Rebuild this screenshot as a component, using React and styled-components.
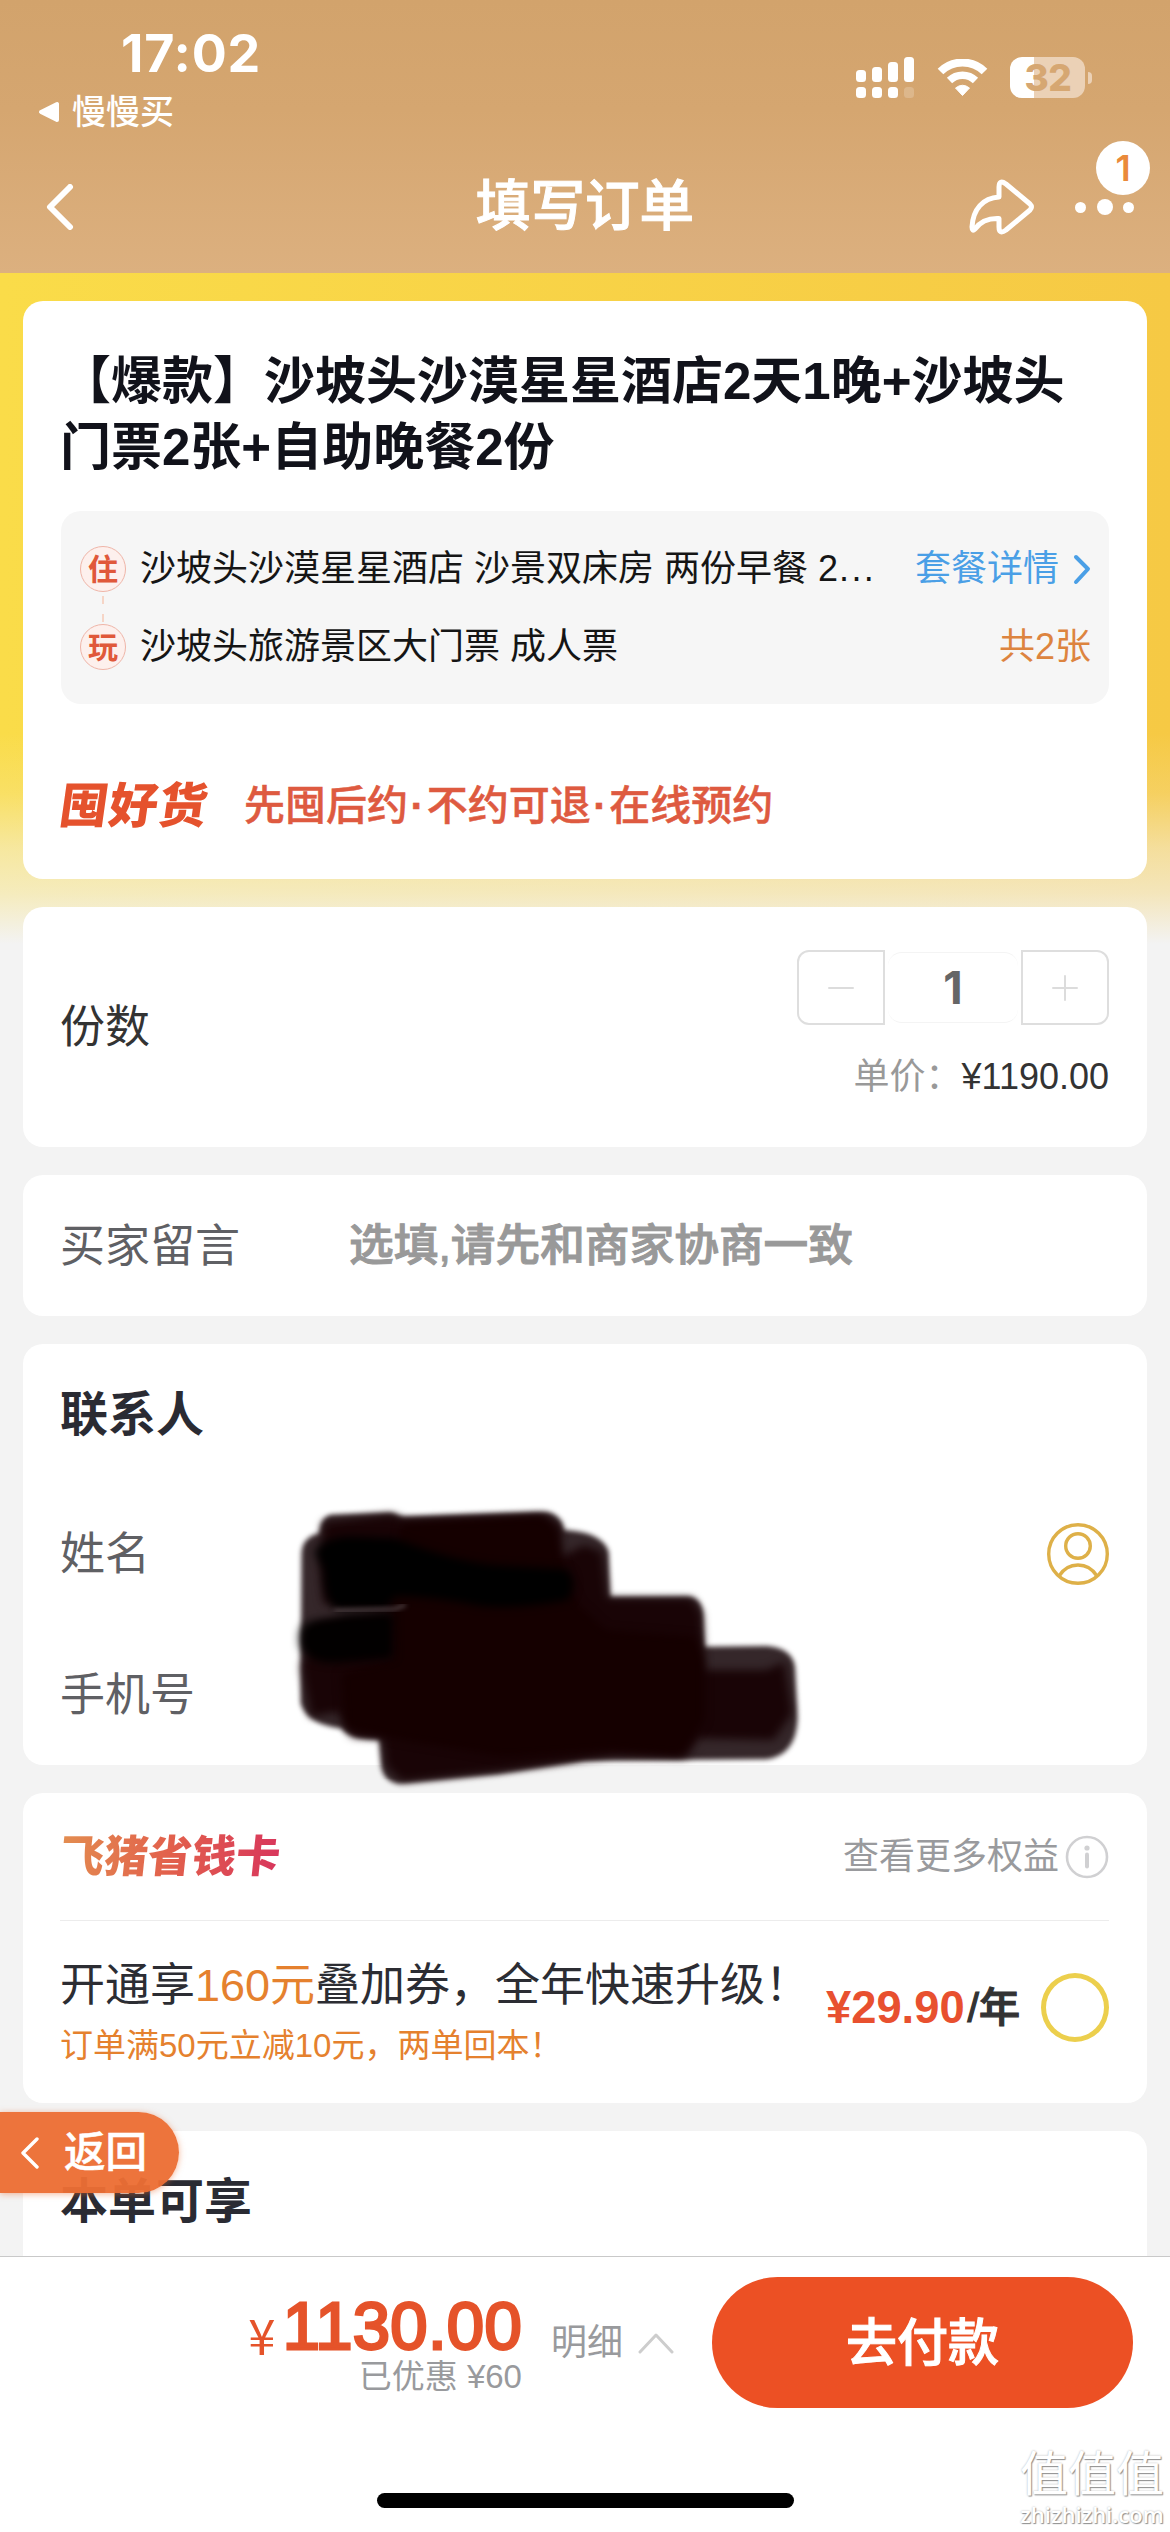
import React from 'react'
import styled, { createGlobalStyle } from 'styled-components'

const GlobalStyle = createGlobalStyle`
    * {
        box-sizing: border-box;
    }
    body {
        margin: 0;
        background: #f3f3f3;
        font-family: "Liberation Sans", "Noto Sans CJK SC", sans-serif;
        color: #2c2d33;
    }
`

const packageItems = [
    { tag: "住", name: "沙坡头沙漠星星酒店 沙景双床房 两份早餐 2", clipped: true, link: "套餐详情" },
    { tag: "玩", name: "沙坡头旅游景区大门票 成人票", count: "共2张" },
]

const signalBars = [
    { x: 0, top: 13 },
    { x: 16, top: 10 },
    { x: 32, top: 5 },
    { x: 48, top: 0 },
]

const Chevron = ({ d, width, height, color, stroke }) => (
    <svg width={width} height={height} viewBox={`0 0 ${width} ${height}`} fill="none">
        <path d={d} stroke={color} strokeWidth={stroke} strokeLinecap="round" strokeLinejoin="round" />
    </svg>
)

const StatusBar = () => {
    return (
        <StatusRow>
            <StatusLeft>
                <Time>17:02</Time>
                <BackApp>
                    <svg width="22" height="22" viewBox="0 0 22 22">
                        <path d="M3 11 L19 3 V19 Z" fill="#fff" stroke="#fff" strokeWidth="4" strokeLinejoin="round" />
                    </svg>
                    慢慢买
                </BackApp>
            </StatusLeft>
            <StatusRight>
                <svg width="59" height="41" viewBox="0 0 59 41" fill="#fff">
                    {signalBars.map((bar) => (
                        <React.Fragment key={bar.x}>
                            <rect x={bar.x} y={bar.top} width="10" height={25 - bar.top} rx="3.5" />
                            <rect x={bar.x} y="30" width="10" height="11" rx="3.5" opacity={bar.x === 48 ? 0.2 : 1} />
                        </React.Fragment>
                    ))}
                </svg>
                <svg width="51" height="38" viewBox="0 0 51 38" fill="none" stroke="#fff">
                    <path d="M3.5 12.5 A31.5 31.5 0 0 1 47.5 12.5" strokeWidth="8" />
                    <path d="M12.5 21.5 A18.5 18.5 0 0 1 38.5 21.5" strokeWidth="7.5" />
                    <path d="M25.500 36.500 L18.500 29 Q25.500 23.500 32.500 29 Z" fill="#fff" strokeWidth="1" strokeLinejoin="round" />
                </svg>
                <Battery>
                    <BatteryBody>32</BatteryBody>
                    <BatteryNub />
                </Battery>
            </StatusRight>
        </StatusRow>
    )
}

const Header = () => {
    return (
        <HeaderContainer>
            <StatusBar />
            <NavBar>
                <NavSide>
                    <Chevron d="M24 3 L4 23 L24 43" width={28} height={46} color="#fff" stroke={6} />
                </NavSide>
                <NavTitle>填写订单</NavTitle>
                <NavSide $right>
                    <svg width="68" height="56" viewBox="0 0 68 56" fill="none">
                        <path
                            d="M31 18 V8 Q31 0 38 5 L62 25 Q65 28 62 31 L38 51 Q31 56 31 48 V39.500 C19 39 12 43 7 50 Q4 53 4 48 C5 30 15 19 31 18 Z"
                            stroke="#fff"
                            strokeWidth="5"
                            strokeLinejoin="round"
                        />
                    </svg>
                    <MoreButton>
                        <Dot $size={11} />
                        <Dot $size={16} />
                        <Dot $size={11} />
                        <NoticeBadge>1</NoticeBadge>
                    </MoreButton>
                </NavSide>
            </NavBar>
        </HeaderContainer>
    )
}

const ProductCard = () => {
    return (
        <Card $height={578}>
            <ProductTitle>【爆款】沙坡头沙漠星星酒店2天1晚+沙坡头门票2张+自助晚餐2份</ProductTitle>
            <PackageBox>
                {packageItems.map((item, index) => (
                    <PackageRow key={item.tag}>
                        <PackageTag $linked={index > 0}>{item.tag}</PackageTag>
                        <PackageName>
                            {item.name}
                            {item.clipped && <ClipDots>...</ClipDots>}
                        </PackageName>
                        {item.link && (
                            <PackageLink>
                                {item.link}
                                <Chevron d="M3 3 L15 15 L3 28" width={18} height={31} color="#4a9fe6" stroke={4} />
                            </PackageLink>
                        )}
                        {item.count && <PackageCount>{item.count}</PackageCount>}
                    </PackageRow>
                ))}
            </PackageBox>
            <PromoRow>
                <PromoLogo>囤好货</PromoLogo>
                <PromoText>先囤后约<b>·</b>不约可退<b>·</b>在线预约</PromoText>
            </PromoRow>
        </Card>
    )
}

const QuantityCard = () => {
    return (
        <Card $height={240}>
            <QuantityRow>
                <Label $dark>份数</Label>
                <QuantityRight>
                    <Stepper>
                        <StepButton $side="left">
                            <Chevron d="M1 13 H25" width={26} height={26} color="#dcdcdc" stroke={2} />
                        </StepButton>
                        <StepValue>1</StepValue>
                        <StepButton $side="right">
                            <Chevron d="M1 13 H25 M13 1 V25" width={26} height={26} color="#dcdcdc" stroke={2} />
                        </StepButton>
                    </Stepper>
                    <UnitPrice>
                        <span>单价：</span>¥1190.00
                    </UnitPrice>
                </QuantityRight>
            </QuantityRow>
        </Card>
    )
}

// Brush strokes covering the contact's name and phone number
const PrivacyBrush = () => {
    return (
        <BrushLayer viewBox="0 0 1568 960" preserveAspectRatio="none">
            <defs>
                <filter id="brushEdge" x="-10%" y="-10%" width="120%" height="120%" colorInterpolationFilters="sRGB">
                    <feGaussianBlur stdDeviation="8" />
                </filter>
                <filter id="brushInner" x="-10%" y="-10%" width="120%" height="120%" colorInterpolationFilters="sRGB">
                    <feGaussianBlur stdDeviation="13" />
                </filter>
            </defs>
            <path
                fill="#35272a"
                filter="url(#brushEdge)"
                d="M88 225 Q88 172 138 160 Q142 110 172 104 L340 98 L370 110 L540 104 L775 97 Q818 105 822 150 Q930 155 948 215 L952 352 L1175 350 Q1208 355 1212 400 L1216 500 L1390 498 Q1462 504 1470 560 L1477 720 Q1472 826 1390 838 L880 842 L640 882 L360 911 Q318 905 312 860 L306 778 Q224 780 200 745 Q104 735 86 670 Z"
            />
            <path
                fill="#190406"
                filter="url(#brushInner)"
                d="M150 125 L340 103 L380 120 L770 104 L815 140 L815 230 L880 195 L930 215 L945 355 L1180 355 L1208 400 L1215 570 L1390 570 L1440 545 L1462 700 L1410 780 L1200 775 L1165 832 L960 828 L640 874 L370 904 L325 860 L315 775 L230 770 L190 695 L115 710 L88 560 L130 430 L360 400 L150 370 L140 240 Z"
            />
            <path
                fill="#150000"
                filter="url(#brushInner)"
                d="M370 130 L760 108 L800 150 L820 260 L860 370 L940 450 L1190 470 L1215 540 L1215 720 L1150 825 L960 808 L660 830 L370 780 L210 740 L200 580 L350 540 L340 380 Z"
            />
            <g filter="url(#brushInner)">
                <path fill="#000" d="M125 215 Q160 165 240 170 L350 175 Q500 240 620 255 L830 268 Q865 300 835 360 Q700 388 590 378 Q460 350 350 348 L330 384 L185 387 Q150 360 150 270 Z" />
                <path fill="#020000" d="M86 500 Q75 440 110 425 L220 405 L345 400 L345 535 L180 548 Q110 548 86 500 Z" />
            </g>
            <path d="M180 393 L350 387 L380 374" stroke="#5a4c4f" strokeWidth="9" fill="none" filter="url(#brushEdge)" />
        </BrushLayer>
    )
}

const ContactCard = () => {
    return (
        <Card $height={421} $raised>
            <FormRow>
                <SectionTitle>联系人</SectionTitle>
            </FormRow>
            <FormRow>
                <Label>姓名</Label>
                <svg width="62" height="62" viewBox="0 0 62 62" fill="none" stroke="#deb048" strokeWidth="3.4">
                    <circle cx="31" cy="31" r="29.3" />
                    <circle cx="31" cy="23" r="12.3" />
                    <path d="M12 53 Q19 42 31 42 Q43 42 50 53" />
                </svg>
            </FormRow>
            <FormRow>
                <Label>手机号</Label>
            </FormRow>
            <PrivacyBrush />
        </Card>
    )
}

const SavingCard = () => {
    return (
        <Card $height={310}>
            <SavingHead>
                <SavingLogo>飞猪省钱卡</SavingLogo>
                <SavingMore>
                    查看更多权益
                    <svg width="44" height="44" viewBox="0 0 44 44" fill="none" stroke="#d0d0d2">
                        <circle cx="22" cy="22" r="20" strokeWidth="2.6" />
                        <circle cx="22" cy="13" r="2.6" fill="#d0d0d2" stroke="none" />
                        <path d="M22 19.500 V31.500" strokeWidth="4" strokeLinecap="round" />
                    </svg>
                </SavingMore>
            </SavingHead>
            <SavingBody>
                <div>
                    <SavingTitle>开通享<em>160元</em>叠加券，全年快速升级！</SavingTitle>
                    <SavingNote>订单满50元立减10元，两单回本！</SavingNote>
                </div>
                <SavingOffer>
                    <OfferPrice>¥29.90</OfferPrice>
                    <OfferUnit>/年</OfferUnit>
                    <Radio />
                </SavingOffer>
            </SavingBody>
        </Card>
    )
}

const Footer = () => {
    return (
        <FooterContainer>
            <PayRow>
                <Total>
                    <TotalPrice><Yen>¥</Yen>1130.00</TotalPrice>
                    <Discount>已优惠 ¥60</Discount>
                </Total>
                <Detail>
                    明细
                    <Chevron d="M2 20 L18 3 L34 20" width={36} height={22} color="#cdcdcd" stroke={3} />
                </Detail>
                <PayButton>去付款</PayButton>
            </PayRow>
            <HomeIndicator />
            <Watermark>
                <WatermarkName>值值值</WatermarkName>
                <WatermarkSite>zhizhizhi.com</WatermarkSite>
            </Watermark>
        </FooterContainer>
    )
}

const App = () => {
    return (
        <Page>
            <GlobalStyle />
            <Header />
            <Content>
                <ProductCard />
                <QuantityCard />
                <Card $height={141}>
                    <MessageRow>
                        <Label>买家留言</Label>
                        <Placeholder>选填,请先和商家协商一致</Placeholder>
                    </MessageRow>
                </Card>
                <ContactCard />
                <SavingCard />
                <Card $height={200}>
                    <FormRow>
                        <SectionTitle>本单可享</SectionTitle>
                    </FormRow>
                </Card>
                <BackPill>
                    <Chevron d="M17 2 L3 16 L17 30" width={20} height={32} color="#fff" stroke={3.4} />
                    返回
                </BackPill>
            </Content>
            <Footer />
        </Page>
    )
}

export default App

const Page = styled.div`
    display: flex;
    flex-direction: column;
    width: 1170px;
    height: 2532px;
    overflow: hidden;
`

const HeaderContainer = styled.header`
    flex: none;
    height: 273px;
    color: #fff;
    background: linear-gradient(to bottom, #d2a36c 0%, #d5a670 40%, #dcb07f 100%);
`

const StatusRow = styled.div`
    display: flex;
    justify-content: space-between;
    height: 140px;
    padding: 24px 78px 0 38px;
`

const StatusLeft = styled.div`
    display: flex;
    flex-direction: column;
`

const Time = styled.div`
    padding-left: 83px;
    font: 700 52px/60px Inter, sans-serif;
    letter-spacing: 0.8px;
`

const BackApp = styled.div`
    display: flex;
    align-items: center;
    gap: 12px;
    margin-top: 4px;
    font-size: 34px;
    line-height: 48px;
    font-weight: 500;
`

const StatusRight = styled.div`
    display: flex;
    align-items: center;
    gap: 22px;
    height: 41px;
    margin-top: 33px;
`

const Battery = styled.div`
    display: flex;
    align-items: center;
    gap: 3px;
`

const BatteryBody = styled.div`
    width: 75px;
    height: 41px;
    border-radius: 12px;
    padding-left: 1px;
    background: linear-gradient(to right, #fff 24.500px, #ebd1b6 24.500px);
    color: #d6a772;
    font: 800 37px/41px Inter, sans-serif;
    letter-spacing: -0.500px;
    text-align: center;
`

const BatteryNub = styled.div`
    width: 4px;
    height: 12px;
    border-radius: 0 5px 5px 0;
    background: #ebd1b6;
`

const NavBar = styled.nav`
    display: flex;
    justify-content: space-between;
    align-items: center;
    height: 134px;
    padding: 0 36px 0 46px;
`

const NavSide = styled.div`
    display: flex;
    flex: 1;
    align-items: center;
    gap: 39px;
    justify-content: ${(props) => (props.$right ? "flex-end" : "flex-start")};
`

const NavTitle = styled.h1`
    margin: 0 0 0 -10px;
    font-size: 54.600px;
    line-height: 70px;
    font-weight: 500;
    -webkit-text-stroke: 1px #fff;
`

const MoreButton = styled.div`
    position: relative;
    display: flex;
    align-items: center;
    gap: 10.500px;
`

const Dot = styled.span`
    width: ${(props) => props.$size}px;
    height: ${(props) => props.$size}px;
    border-radius: 50%;
    background: #fff;
`

const NoticeBadge = styled.span`
    position: absolute;
    left: 21px;
    bottom: 20px;
    width: 54px;
    height: 54px;
    border-radius: 50%;
    background: #fff;
    color: #ea8a3a;
    font: 600 36px/55px Inter, sans-serif;
    text-align: center;
`

const Content = styled.main`
    position: relative;
    flex: 1;
    display: flex;
    flex-direction: column;
    gap: 28px;
    min-height: 0;
    overflow: hidden;
    padding: 28px 23px 0;
    background:
        linear-gradient(
            to bottom,
            rgba(243, 243, 243, 0) 460px,
            rgba(243, 243, 243, 0.16) 520px,
            rgba(243, 243, 243, 0.5) 575px,
            rgba(243, 243, 243, 0.68) 620px,
            #f3f3f3 671px
        ),
        linear-gradient(to right, #fadc49, #f6c944);
`

const Card = styled.section`
    position: relative;
    z-index: ${(props) => (props.$raised ? 1 : 0)};
    flex: none;
    display: flex;
    flex-direction: column;
    height: ${(props) => props.$height}px;
    padding: 0 38px 0 37px;
    border-radius: 20px;
    background: #fff;
`

const ProductTitle = styled.h2`
    margin: 48px 0 0;
    color: #11121a;
    font-size: 51px;
    line-height: 66px;
    font-weight: 700;
    word-break: break-all;
`

const PackageBox = styled.div`
    height: 193px;
    margin-top: 30px;
    margin-left: 1px;
    padding: 19px 18px 0 19px;
    border-radius: 20px;
    background: #f6f6f6;
`

const PackageRow = styled.div`
    display: flex;
    align-items: center;
    height: 78px;
    color: #151515;
    font-size: 36px;
    line-height: 48px;
`

const PackageTag = styled.span`
    position: relative;
    width: 46px;
    height: 46px;
    margin-right: 14px;
    border: 1.500px solid #efb5a8;
    border-radius: 50%;
    background: #fdf0ed;
    color: #e0583a;
    font-size: 30px;
    line-height: 45px;
    font-weight: 700;
    text-align: center;

    &::before {
        content: "";
        display: ${(props) => (props.$linked ? "block" : "none")};
        position: absolute;
        left: 21px;
        bottom: 47px;
        width: 2px;
        height: 26px;
        background: linear-gradient(to bottom, #f6d5c6 8px, transparent 8px, transparent 18px, #f6d5c6 18px);
    }
`

const PackageName = styled.span`
    flex: 1;
    white-space: nowrap;
`

const ClipDots = styled.span`
    padding-left: 1px;
    letter-spacing: 2.400px;
`

const PackageLink = styled.span`
    display: flex;
    align-items: center;
    gap: 14px;
    color: #4a9fe6;
`

const PackageCount = styled.span`
    color: #dd843f;
`

const PromoRow = styled.div`
    display: flex;
    align-items: center;
    height: 83px;
    margin-top: 60px;
`

const PromoLogo = styled.span`
    width: 184px;
    color: #e5522d;
    font-size: 48.500px;
    line-height: 60px;
    font-weight: 900;
    letter-spacing: 1px;
    transform: skewX(-8deg);
`

const PromoText = styled.span`
    color: #de5a40;
    font-size: 41px;
    line-height: 60px;
    font-weight: 500;
    -webkit-text-stroke: 0.500px #de5a40;

    b {
        padding: 0 2.500px;
    }
`

const QuantityRow = styled.div`
    display: flex;
    flex: 1;
    justify-content: space-between;
    align-items: center;
`

const Label = styled.span`
    padding-top: 2px;
    color: ${(props) => (props.$dark ? "#333" : "#5f6064")};
    font-size: 45px;
    line-height: 60px;
`

const QuantityRight = styled.div`
    display: flex;
    flex-direction: column;
    align-items: flex-end;
`

const Stepper = styled.div`
    display: flex;
    align-items: center;
    height: 75px;
`

const StepButton = styled.button`
    display: flex;
    align-items: center;
    justify-content: center;
    width: 88px;
    height: 75px;
    padding: 0;
    border: 2px solid #dedede;
    border-radius: ${(props) => (props.$side === "left" ? "12px 0 0 12px" : "0 12px 12px 0")};
    background: #fff;
`

const StepValue = styled.span`
    width: 130px;
    height: 71px;
    margin: 0 3px;
    border: 1px solid #f4f4f4;
    border-width: 1px 0;
    border-radius: 14px;
    color: #666;
    font: 700 45px/70px Inter, sans-serif;
    text-align: center;
`

const UnitPrice = styled.div`
    margin-top: 25px;
    color: #333;
    font-size: 36px;
    line-height: 54px;

    span {
        color: #999;
    }
`

const MessageRow = styled.div`
    display: grid;
    grid-template-columns: 289px 1fr;
    align-items: center;
    flex: 1;
`

const Placeholder = styled.span`
    padding-top: 1px;
    color: #999;
    font-size: 44.700px;
    line-height: 60px;
    font-weight: 500;
    -webkit-text-stroke: 1px #999;
`

const FormRow = styled.div`
    display: flex;
    align-items: center;
    justify-content: space-between;
    flex: none;
    height: 140.300px;
`

const SectionTitle = styled.h3`
    margin: 0;
    padding-top: 2px;
    color: #2a2b33;
    font-size: 48px;
    line-height: 64px;
    font-weight: 700;
`

const BrushLayer = styled.svg`
    position: absolute;
    left: 247px;
    top: 136px;
    width: 560px;
    height: 320px;
`

const SavingHead = styled.div`
    display: flex;
    align-items: center;
    justify-content: space-between;
    height: 128px;
    border-bottom: 1px solid #ececec;
`

const SavingLogo = styled.span`
    background: linear-gradient(to right, #e38d50, #e2604c 50%, #d8365c);
    background-clip: text;
    -webkit-background-clip: text;
    color: transparent;
    font-size: 44px;
    line-height: 60px;
    font-weight: 900;
    transform: skewX(-6deg);
`

const SavingMore = styled.span`
    display: flex;
    align-items: center;
    gap: 6px;
    color: #999a9d;
    font-size: 36px;
    line-height: 48px;
`

const SavingBody = styled.div`
    display: flex;
    justify-content: space-between;
    align-items: flex-start;
    padding-top: 33px;
    white-space: nowrap;
`

const SavingTitle = styled.div`
    font-size: 45px;
    line-height: 64px;

    em {
        color: #e5812e;
        font-style: normal;
    }
`

const SavingNote = styled.div`
    color: #e5812e;
    font-size: 33px;
    line-height: 56px;
`

const SavingOffer = styled.div`
    display: flex;
    align-items: center;
    height: 69px;
    margin-top: 19px;
    margin-left: -60px;
`

const OfferPrice = styled.span`
    color: #e8502f;
    font-size: 45.300px;
    line-height: 60px;
    font-weight: 700;
`

const OfferUnit = styled.span`
    margin: 0 21px 0 3px;
    color: #333;
    font-size: 41px;
    line-height: 60px;
    font-weight: 500;
    -webkit-text-stroke: 1.200px #333;
`

const Radio = styled.span`
    width: 68px;
    height: 69px;
    border: 5px solid #eccf4d;
    border-radius: 50%;
`

const BackPill = styled.div`
    position: absolute;
    left: 0;
    top: 1839px;
    z-index: 2;
    display: flex;
    align-items: center;
    gap: 24px;
    width: 179px;
    height: 81px;
    padding-left: 20px;
    border-radius: 0 41px 41px 0;
    background: rgba(236, 110, 52, 0.96);
    box-shadow: 0 1px 6px rgba(236, 110, 52, 0.5);
    color: #fff;
    font-size: 41.500px;
    line-height: 60px;
    font-weight: 500;
    -webkit-text-stroke: 0.500px #fff;
`

const FooterContainer = styled.footer`
    position: relative;
    flex: none;
    height: 276px;
    border-top: 1px solid #c9c9c9;
    background: #fff;
`

const PayRow = styled.div`
    display: flex;
    align-items: center;
    justify-content: flex-end;
    height: 131px;
    margin-top: 20px;
    padding-right: 37px;
`

const Total = styled.div`
    display: flex;
    flex-direction: column;
    align-items: flex-end;
    padding-top: 5px;
`

const TotalPrice = styled.div`
    display: flex;
    align-items: center;
    gap: 7px;
    color: #e5532a;
    font-size: 67px;
    line-height: 64px;
    letter-spacing: 0.300px;
    -webkit-text-stroke: 2.800px #e5532a;
`

const Yen = styled.span`
    padding-top: 15px;
    font-family: "Noto Sans CJK SC", sans-serif;
    font-size: 49px;
    line-height: 48px;
    -webkit-text-stroke: 0;
`

const Discount = styled.div`
    color: #999a9d;
    font-size: 33px;
    line-height: 38px;
`

const Detail = styled.div`
    display: flex;
    align-items: center;
    gap: 15px;
    margin: 0 38px 0 29px;
    color: #999a9d;
    font-size: 36px;
    line-height: 48px;
`

const PayButton = styled.button`
    width: 421px;
    height: 131px;
    padding: 2px 0 0;
    border: 0;
    border-radius: 66px;
    background: #ec5024;
    color: #fff;
    font-family: inherit;
    font-size: 51px;
    line-height: 70px;
    font-weight: 500;
    -webkit-text-stroke: 1px #fff;
`

const HomeIndicator = styled.div`
    width: 417px;
    height: 15px;
    margin: 85px auto 0;
    border-radius: 8px;
    background: #000;
`

const Watermark = styled.div`
    position: absolute;
    right: 6px;
    bottom: 5px;
    display: flex;
    flex-direction: column;
    align-items: center;
    color: #fff;
    text-shadow: 1px 1px 1px #8f8f8f, 0 0 2px #b5b5b5;
`

const WatermarkName = styled.span`
    font-size: 48px;
    line-height: 52px;
    font-weight: 400;
`

const WatermarkSite = styled.span`
    font: 600 22px/26px "Open Sans", sans-serif;
`
